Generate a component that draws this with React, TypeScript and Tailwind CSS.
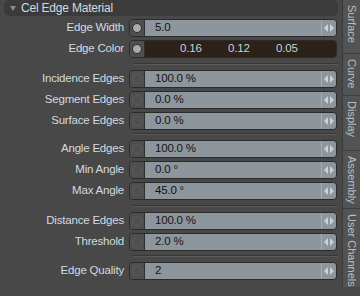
import React from "react";

type Row = { label: string; value?: string; active?: boolean; color?: string[] };

const groups: Row[][] = [
  [
    { label: "Edge Width", value: "5.0", active: true },
    { label: "Edge Color", active: true, color: ["0.16", "0.12", "0.05"] },
  ],
  [
    { label: "Incidence Edges", value: "100.0 %" },
    { label: "Segment Edges", value: "0.0 %" },
    { label: "Surface Edges", value: "0.0 %" },
  ],
  [
    { label: "Angle Edges", value: "100.0 %" },
    { label: "Min Angle", value: "0.0 °" },
    { label: "Max Angle", value: "45.0 °" },
  ],
  [
    { label: "Distance Edges", value: "100.0 %" },
    { label: "Threshold", value: "2.0 %" },
  ],
  [{ label: "Edge Quality", value: "2" }],
];

const gaps = ["mt-[5px] mb-[2px]", "mt-[3px] mb-[2px]", "mt-[5px] mb-[2px]", "mt-[4px] mb-[2px]"];

const tabs = [
  { label: "Surface", h: "h-[53px]" },
  { label: "Curve", h: "h-[42px]" },
  { label: "Display", h: "h-[55px]" },
  { label: "Assembly", h: "h-[58px]" },
  { label: "User Channels", h: "h-[79px]" },
];

function Arrows() {
  return (
    <svg width="10" height="8" viewBox="0 0 10 8">
      <path d="M4 0 L0 4 L4 8 Z" fill="#cdd2d6" />
      <path d="M6 0 L10 4 L6 8 Z" fill="#cdd2d6" />
    </svg>
  );
}

function Knob({ active }: { active?: boolean }) {
  return (
    <div className="w-[15px] h-full flex items-center justify-center bg-[#4f4f4f] border-r border-[#2f2f2f]">
      {active ? (
        <div className="w-[10px] h-[10px] rounded-full bg-[#a7a9ab] border border-[#2a2a2a]" />
      ) : (
        <div className="w-[10px] h-[10px] rounded-full border border-[#5d5d5d]" />
      )}
    </div>
  );
}

function Field({ row }: { row: Row }) {
  return (
    <div className="flex items-center h-[18px] mt-[3px]">
      <div className="w-[125px] text-right text-[#d3dae0] pr-[1px] whitespace-nowrap">{row.label}</div>
      <div className="ml-[4px] w-[208px] h-full flex rounded-[4px] border border-[#2b2b2b] overflow-hidden">
        <Knob active={row.active} />
        {row.color ? (
          <div className="flex-1 flex items-center bg-[#2c2218] text-[#c9d1d8] pl-[35px]">
            {row.color.map((c) => (
              <span key={c} className="w-[48px]">{c}</span>
            ))}
          </div>
        ) : (
          <>
            <div className="flex-1 flex items-center bg-[#8e969d] text-[#121212] pl-[10px]">{row.value}</div>
            <div className="w-[15px] flex items-center justify-center bg-[#8e969d] border-l border-[#a5acb2]">
              <Arrows />
            </div>
          </>
        )}
      </div>
    </div>
  );
}

export default function App() {
  return (
    <div
      className="w-[360px] h-[296px] bg-[#484848] flex overflow-hidden text-[11.5px] tracking-[-0.2px] leading-none"
      style={{ fontFamily: '"Liberation Sans", Arial, sans-serif' }}
    >
      <div className="w-[342px] flex flex-col">
        <div className="h-[16px] ml-[4px] mr-[4px] rounded-[5px] bg-[#3b3b3b] flex items-center">
          <svg width="6" height="5" viewBox="0 0 6 5" className="ml-[6px]">
            <path d="M0 0 H6 L3 5 Z" fill="#8a8a8a" />
          </svg>
          <span className="ml-[5px] text-[#d3dae0] text-[12px]">Cel Edge Material</span>
        </div>
        {groups.map((g, gi) => (
          <div key={gi}>
            {g.map((r) => (
              <Field key={r.label} row={r} />
            ))}
            {gi < groups.length - 1 && (
              <div className={`${gaps[gi]} ml-[133px] w-[205px] h-[2px] border-t border-[#373737] border-b border-b-[#595959]`} />
            )}
          </div>
        ))}
      </div>
      <div className="w-[18px] flex flex-col">
        <div className="bg-[#535353] border-l border-[#3a3a3a] flex flex-col">
          {tabs.map((t, i) => (
            <div
              key={t.label}
              className={`${t.h} flex flex-col items-center pt-[5px] ${i > 0 ? "border-t border-[#3d3d3d]" : ""}`}
            >
              <span className="[writing-mode:vertical-rl] whitespace-nowrap text-[11px] tracking-normal text-[#b3c0cc]">{t.label}</span>
            </div>
          ))}
        </div>
      </div>
    </div>
  );
}
